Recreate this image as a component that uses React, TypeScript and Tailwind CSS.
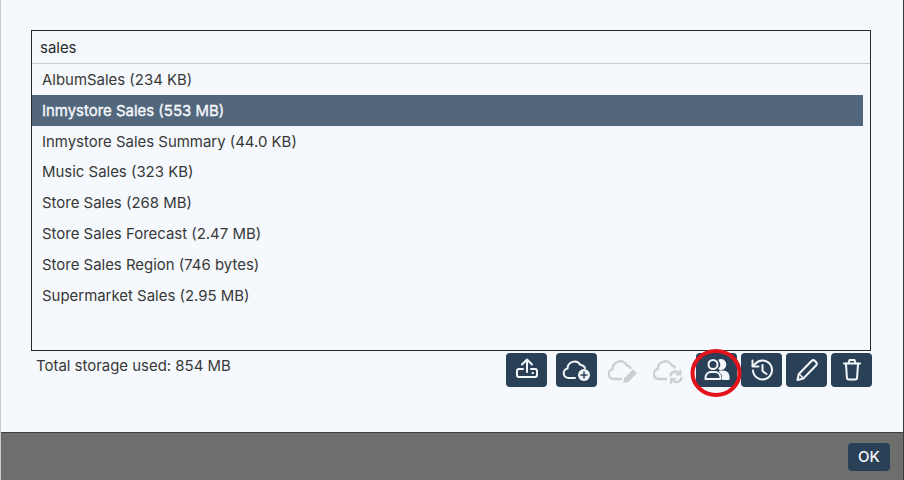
const files = [
  "AlbumSales (234 KB)",
  "Inmystore Sales (553 MB)",
  "Inmystore Sales Summary (44.0 KB)",
  "Music Sales (323 KB)",
  "Store Sales (268 MB)",
  "Store Sales Forecast (2.47 MB)",
  "Store Sales Region (746 bytes)",
  "Supermarket Sales (2.95 MB)",
];

function Icon({ children, sw = 2 }: { children: React.ReactNode; sw?: number }) {
  return (
    <svg
      width="30"
      height="30"
      viewBox="0 0 30 30"
      fill="none"
      stroke="currentColor"
      strokeWidth={sw}
      strokeLinecap="round"
      strokeLinejoin="round"
    >
      {children}
    </svg>
  );
}

function ToolButton({ children, className = "" }: { children: React.ReactNode; className?: string }) {
  return (
    <button className={`flex h-[34px] w-[41px] items-center justify-center rounded-[4px] bg-[#2a4056] text-[#f3f7fb] ${className}`}>
      {children}
    </button>
  );
}

function GhostButton({ children }: { children: React.ReactNode }) {
  return <div className="flex h-[34px] w-[41px] items-center justify-center text-[#cdcfd0]">{children}</div>;
}

export default function App() {
  return (
    <div className="flex h-[480px] w-[904px] flex-col overflow-hidden border-r border-l border-r-[#3a3a3a] border-l-[#c9c9c9] bg-[#f5f8fc] font-['Inter',sans-serif] text-[14.95px] text-[#383838]">
      <div className="flex h-[432px] flex-col pt-[30px] pl-[30px]">
        <div className="flex h-[321px] w-[840px] flex-col border border-[#24282d]">
          <div className="flex h-[33px] items-center border-b border-[#c9ccd0] pt-[2px] pl-2 text-[#2b2b2b]">sales</div>
          <div className="mr-[7px] flex flex-col">
            {files.map((file) => (
              <div
                key={file}
                className={
                  file.startsWith("Inmystore Sales (")
                    ? "flex h-[30.86px] items-center bg-[#53677c] pt-[1.14px] pl-[10px] text-[#f6f9fc] [-webkit-text-stroke:0.35px_#f6f9fc]"
                    : "flex h-[30.86px] items-center pt-[1.14px] pl-[10px]"
                }
              >
                {file}
              </div>
            ))}
          </div>
        </div>

        <div className="flex w-[841px] items-start">
          <div className="mt-[4px] ml-[5px] flex-1">Total storage used: 854 MB</div>
          <div className="relative mt-[2px] flex">
            <ToolButton>
              <Icon>
                <path d="M15 17V5" />
                <path d="M10 9.500 15 4.500l5 5" />
                <path d="M11 14H7A2 2 0 0 0 5 16v4a2 2 0 0 0 2 2h16a2 2 0 0 0 2-2v-4a2 2 0 0 0-2-2h-4" />
                <path d="M20.500 18h.5" />
              </Icon>
            </ToolButton>
            <ToolButton className="ml-[9px]">
              <Icon>
                <path d="M13 23H6.500a4.800 4.800 0 0 1-1-9.500A7 7 0 0 1 18.500 10a5 5 0 0 1 4.500 3" />
                <circle cx="22" cy="20" r="6" fill="currentColor" stroke="none" />
                <path d="M22 17v6M19 20h6" stroke="#2a4056" strokeWidth="1.500" />
              </Icon>
            </ToolButton>
            <div className="ml-[5px] flex gap-[4px]">
              <GhostButton>
                <Icon sw={2.500}>
                  <path d="M13 24H6a5 5 0 0 1-1.200-9.900A7.500 7.500 0 0 1 19 10.500a5 5 0 0 1 3.500 2.500" />
                  <path d="M15 28l1.300-5 8.700-8.700 4 4-8.700 8.700z" fill="currentColor" stroke="none" />
                </Icon>
              </GhostButton>
              <GhostButton>
                <Icon sw={2.500}>
                  <path d="M13 24H6a5 5 0 0 1-1.200-9.900A7.500 7.500 0 0 1 19 10.500a5 5 0 0 1 3 2" />
                  <path d="M17.500 20.500a5 5 0 0 1 8.500-2.500M28.500 23a5 5 0 0 1-8.500 2.500" />
                  <path d="M27.500 15.500v4h-4M18 28v-4h4" strokeWidth="2" />
                </Icon>
              </GhostButton>
            </div>
            <ToolButton className="ml-[8px]">
              <Icon>
                <circle cx="11" cy="9.500" r="4.500" />
                <path d="M3.500 24v-1.500A5.500 5.500 0 0 1 9 17h4a5.500 5.500 0 0 1 5.500 5.500V24z" />
                <path d="M17.500 5.200a4.500 4.500 0 1 1 0 8.600c1.200-1.200 1.800-2.700 1.800-4.300s-.6-3.100-1.800-4.300z" fill="currentColor" />
                <path d="M18 16.500h3.500a5 5 0 0 1 5 5V24h-5.500v-2c0-2-1.200-4-3-5.500z" fill="currentColor" />
              </Icon>
            </ToolButton>
            <ToolButton className="ml-[4px]">
              <Icon>
                <path d="M6 15.500A9.500 9.500 0 1 0 8.500 8.500L6 11" />
                <path d="M5.500 5.500v6h6" />
                <path d="M15.500 10v6l4 3" />
              </Icon>
            </ToolButton>
            <ToolButton className="ml-[4px]">
              <Icon>
                <path d="M5.500 25l1.300-6L19.500 6a2.500 2.500 0 0 1 3.500 0l1 1a2.500 2.500 0 0 1 0 3.500L11.300 23.500z" />
                <path d="M7 18.800l4.300 4.500" strokeWidth="1.500" />
              </Icon>
            </ToolButton>
            <ToolButton className="ml-[4px]">
              <Icon>
                <path d="M7 8.500h16" />
                <path d="M11.500 8 12.500 5h5l1 3" />
                <path d="M9 9l.9 13.500a2 2 0 0 0 2 2h6.200a2 2 0 0 0 2-2L21 9" />
              </Icon>
            </ToolButton>
            <svg className="absolute top-[-5px] left-[184px]" width="52" height="50" viewBox="0 0 52 50" fill="none">
              <ellipse cx="26" cy="25" rx="23.500" ry="22" stroke="#e3131b" strokeWidth="4" />
            </svg>
          </div>
        </div>
      </div>

      <div className="flex h-[48px] items-start justify-end border-t border-[#3d3f3e] bg-[#6d6f6d] pt-[10px] pr-[13px]">
        <button className="flex h-[28px] w-[42px] items-center justify-center rounded-[4px] bg-[#2a4056] text-[15px] font-medium text-[#f6f9fc]">
          OK
        </button>
      </div>
    </div>
  );
}
